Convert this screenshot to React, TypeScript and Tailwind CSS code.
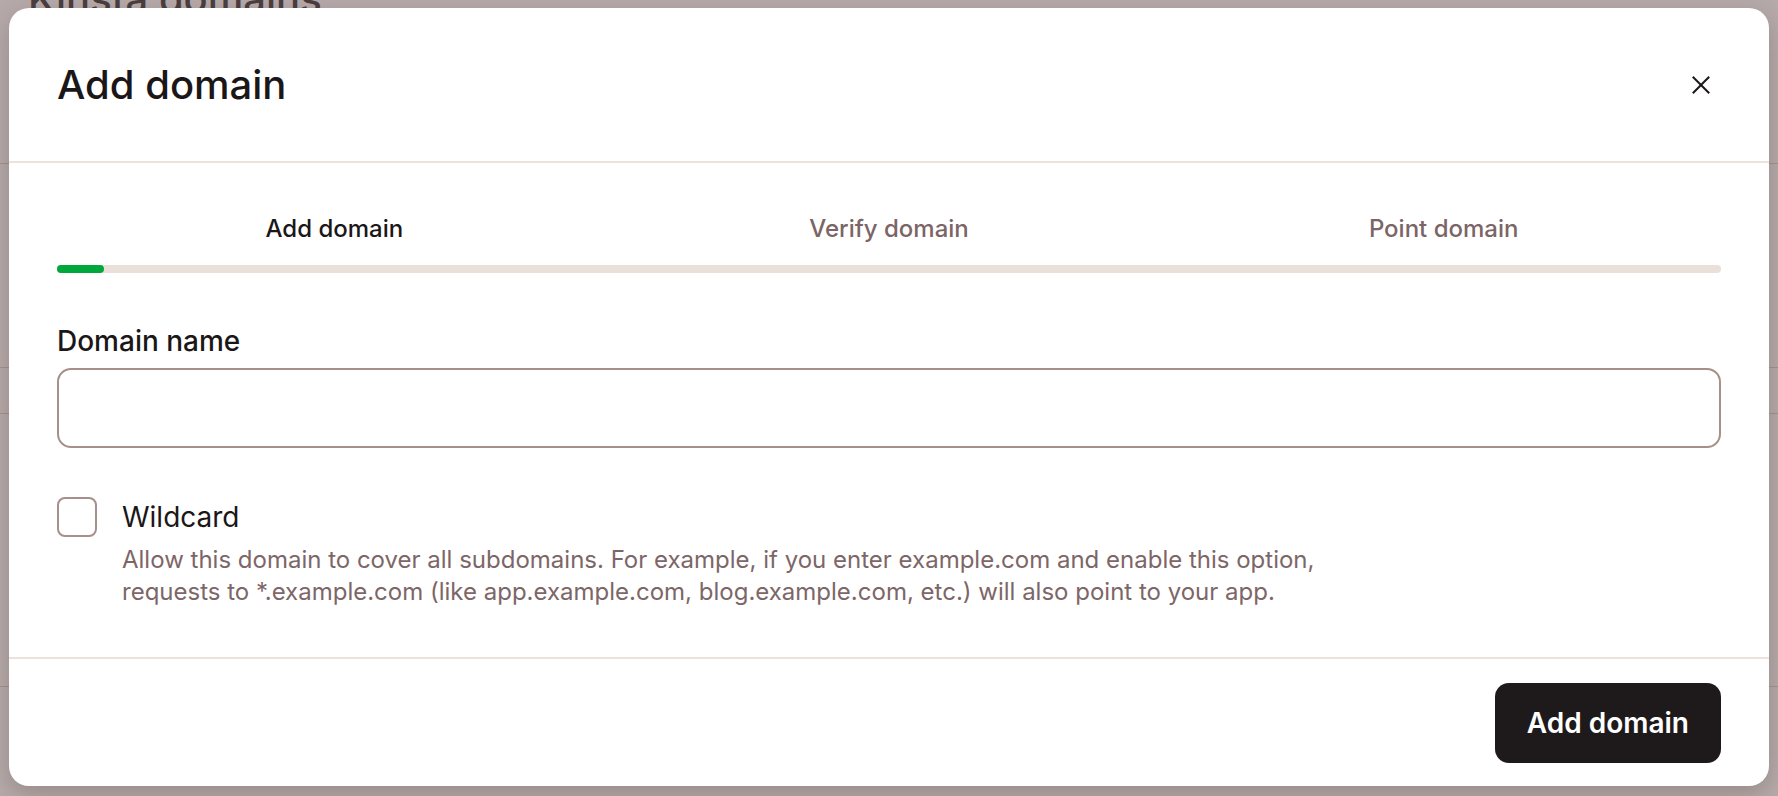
import { useState } from "react";

const STEPS = ["Add domain", "Verify domain", "Point domain"];

function CloseIcon() {
  return (
    <svg width="18" height="18" viewBox="0 0 18 18" fill="none" stroke="currentColor" strokeWidth="2" strokeLinecap="square">
      <path d="M1.5 1.5 16.5 16.5" />
      <path d="M16.5 1.5 1.5 16.5" />
    </svg>
  );
}

export default function App() {
  const [wildcard, setWildcard] = useState(false);
  const [domain, setDomain] = useState("");
  const activeStep = 0;

  return (
    <div className="relative h-[796px] w-full overflow-hidden bg-[#b6abaa] font-['Inter',sans-serif]">
      {/* page behind the overlay */}
      <div className="flex flex-col">
        <h1 className="-mt-[25px] ml-[28px] text-[40px] font-medium leading-[48px] text-[#4b3e3f]">Kinsta domains</h1>
        <div className="mt-[140px] border-b border-[#a6918f]" />
        <div className="mt-[203px] border-b border-[#a6918f]" />
        <div className="mt-[45px] border-b border-[#a6918f]" />
        <div className="mt-[272px] border-b border-[#a6918f]" />
      </div>

      {/* modal */}
      <div className="absolute inset-0 flex items-start justify-center pt-2">
        <div className="flex w-[1760px] flex-col rounded-[20px] bg-white shadow-[0_8px_24px_rgba(60,40,40,0.25)]">
          {/* header */}
          <div className="flex h-[155px] items-center justify-between border-b-2 border-[#ede1dc] px-12">
            <h2 className="text-[40px] font-medium leading-[48px] text-[#1b1718]">Add domain</h2>
            <button type="button" className="flex h-10 w-10 items-center justify-center text-[#1b1718]">
              <CloseIcon />
            </button>
          </div>

          {/* body */}
          <div className="flex flex-col px-12 pb-[49px] pt-[50px]">
            <div className="grid grid-cols-3">
              {STEPS.map((s, i) => (
                <div
                  key={s}
                  className={
                    "text-center text-[24px] font-medium leading-[32px] " +
                    (i === activeStep ? "text-[#1b1718]" : "text-[#7b6566]")
                  }
                >
                  {s}
                </div>
              ))}
            </div>
            <div className="mt-[20px] h-2 w-full rounded-full bg-[#ebdfd9]">
              <div className="h-2 w-[47px] rounded-full bg-[#00a83c]" />
            </div>

            <label className="mt-[50px] text-[28px] font-medium leading-[36px] text-[#1b1718]">Domain name</label>
            <input
              value={domain}
              onChange={(e) => setDomain(e.target.value)}
              className="mt-[9px] h-20 w-full rounded-[14px] border-2 border-[#a78f8a] px-5 text-[24px] text-[#1b1718] outline-none"
            />

            <div className="mt-[49px] flex gap-[25px]">
              <button
                type="button"
                onClick={() => setWildcard(!wildcard)}
                className="h-10 w-10 shrink-0 rounded-[8px] border-2 border-[#a78f8a] bg-white"
              />
              <div className="flex flex-col">
                <span className="text-[28px] leading-[40px] text-[#1b1718]">Wildcard</span>
                <p className="mt-[7px] max-w-[1220px] text-[24px] leading-[32px] text-[#7d6667]">
                  Allow this domain to cover all subdomains. For example, if you enter example.com and enable this option,
                  requests to *.example.com (like app.example.com, blog.example.com, etc.) will also point to your app.
                </p>
              </div>
            </div>
          </div>

          {/* footer */}
          <div className="flex h-[129px] items-center justify-end border-t-2 border-[#ede1dc] px-12">
            <button
              type="button"
              className="h-20 rounded-[14px] bg-[#1e1a1b] px-[32px] text-[28px] font-semibold text-white"
            >
              Add domain
            </button>
          </div>
        </div>
      </div>
    </div>
  );
}
